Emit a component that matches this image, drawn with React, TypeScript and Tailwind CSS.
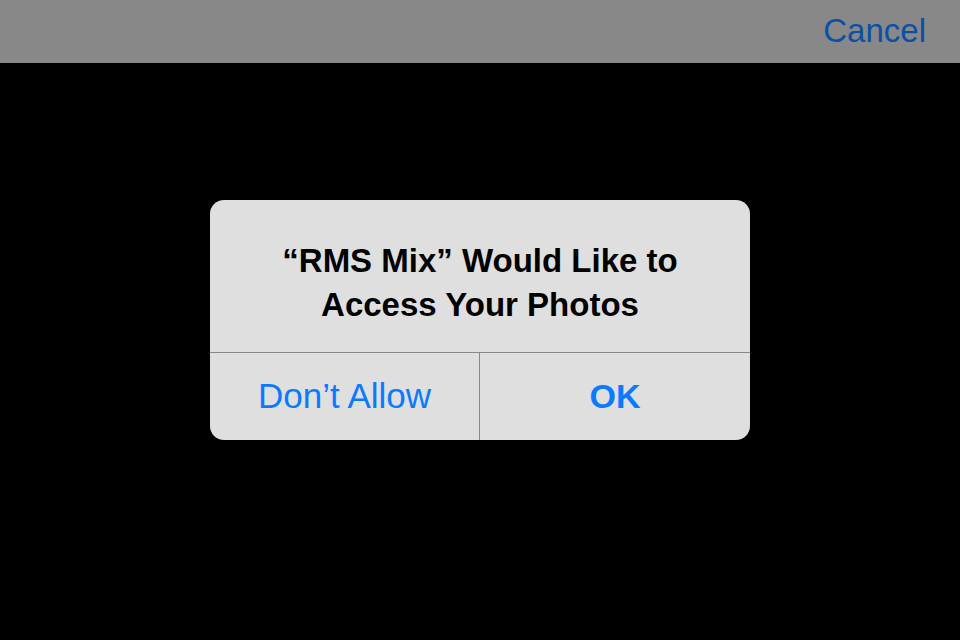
export default function App() {
  return (
    <div
      className="w-[960px] h-[640px] bg-black flex flex-col overflow-hidden"
      style={{ fontFamily: '"Liberation Sans", Arial, sans-serif' }}
    >
      <div className="h-[63px] bg-[#888888] flex justify-end pr-[34px] pt-[14px]">
        <span className="text-[33px] leading-[33px] text-[#0b50a6]">Cancel</span>
      </div>
      <div className="flex-1 flex justify-center pt-[137px]">
        <div className="w-[540px] h-[240px] bg-[#dfdfdf] rounded-[14px] flex flex-col overflow-hidden">
          <div className="h-[153px] pt-[39px] text-center text-black font-bold text-[33px] leading-[44px] border-b border-[#888888]">
            <div>“RMS Mix” Would Like to</div>
            <div>Access Your Photos</div>
          </div>
          <div className="flex flex-1">
            <div className="w-[270px] flex items-center justify-center border-r border-[#888888] text-[35px] text-[#0a7aff]">
              Don’t Allow
            </div>
            <div className="flex-1 flex items-center justify-center text-[34px] font-bold text-[#0a7aff]">
              OK
            </div>
          </div>
        </div>
      </div>
    </div>
  );
}
